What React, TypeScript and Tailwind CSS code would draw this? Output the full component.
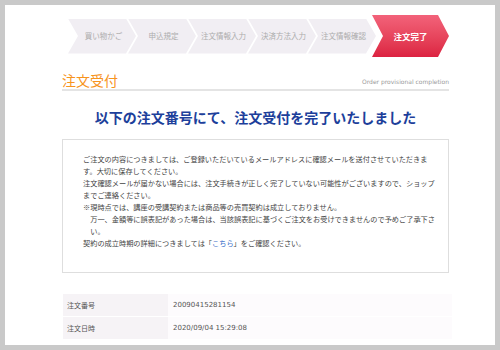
import React from 'react';

const jp = "font-['Noto_Sans_CJK_JP','Noto_Sans',sans-serif]";

const steps = ['買い物かご', '申込規定', '注文情報入力', '決済方法入力', '注文情報確認'];

const bodyLines: React.ReactNode[] = [
  'ご注文の内容につきましては、ご登録いただいているメールアドレスに確認メールを送付させていただきま',
  'す。大切に保存してください。',
  '注文確認メールが届かない場合には、注文手続きが正しく完了していない可能性がございますので、ショップ',
  'までご連絡ください。',
  '※現時点では、講座の受講契約または商品等の売買契約は成立しておりません。',
  '　万一、金額等に誤表記があった場合は、当該誤表記に基づくご注文をお受けできませんので予めご了承下さ',
  '　い。',
  <>
    　契約の成立時期の詳細につきましては「<span className="text-[#3a6fc8]">こちら</span>」をご確認ください。
  </>,
];

const orderInfo = [
  { label: '注文番号', value: '20090415281154' },
  { label: '注文日時', value: '2020/09/04 15:29:08' },
];

// Step bar: grey chevrons followed by the active red one
const StepBar: React.FC = () => (
  <div className="flex items-center ml-[63px] h-[42px]">
    {steps.map((s, i) => (
      <div
        key={s}
        className={`h-[35px] w-[68px] shrink-0 flex items-center justify-center pl-[3px] bg-[#f1eef3] text-[#acacac] text-[7.5px] ${jp} [clip-path:polygon(0_0,calc(100%_-_10px)_0,100%_50%,calc(100%_-_10px)_100%,0_100%,10px_50%)] ${i > 0 ? '-ml-[8px]' : ''}`}
      >
        {s}
      </div>
    ))}
    <div
      className={`h-[42px] w-[77px] shrink-0 -ml-[4px] flex items-center justify-center bg-gradient-to-b from-[#f2627a] to-[#dc2141] text-white font-bold text-[8.5px] ${jp} [clip-path:polygon(0_0,calc(100%_-_11px)_0,100%_50%,calc(100%_-_11px)_100%,0_100%,11px_50%)]`}
    >
      注文完了
    </div>
  </div>
);

export default function App() {
  return (
    <div className="w-[500px] h-[350px] bg-[#c9c9c9] p-[5px]">
      <div className="h-full bg-white pt-[10px] overflow-hidden">
        <StepBar />

        <div className="ml-[57px] w-[387px]">
          <div className="mt-[15px] flex justify-between items-end pb-[1px] border-b-2 border-[#e4e4e4]">
            <h2 className={`text-[14px] leading-[16px] text-[#f7941d] ${jp}`}>注文受付</h2>
            <span className="text-[6px] leading-[8px] mb-[2px] text-[#9a9a9a] font-['DejaVu_Sans',sans-serif]">
              Order provisional completion
            </span>
          </div>

          <h1 className={`mt-[18px] text-center text-[14px] leading-[16px] font-bold text-[#1d3f9b] ${jp}`}>
            以下の注文番号にて、注文受付を完了いたしました
          </h1>

          <div className={`mt-[14px] border border-[#dedede] pl-[20px] pt-[13px] pb-[23px] text-[7.2px] leading-[12px] text-[#444] ${jp}`}>
            {bodyLines.map((line, i) => (
              <div key={i} className="whitespace-nowrap">
                {line}
              </div>
            ))}
          </div>

          <div className="mt-[21px] ml-[1px] w-[389px]">
            {orderInfo.map((row) => (
              <div key={row.label} className="flex h-[23px] border-b border-white">
                <div className={`w-[105px] bg-[#f6f3f6] pl-[4px] flex items-center text-[7px] text-[#555] ${jp}`}>
                  {row.label}
                </div>
                <div className="flex-1 bg-[#fdfbfd] pl-[5px] flex items-center text-[7px] text-[#555] font-['DejaVu_Sans',sans-serif]">
                  {row.value}
                </div>
              </div>
            ))}
          </div>
        </div>
      </div>
    </div>
  );
}
